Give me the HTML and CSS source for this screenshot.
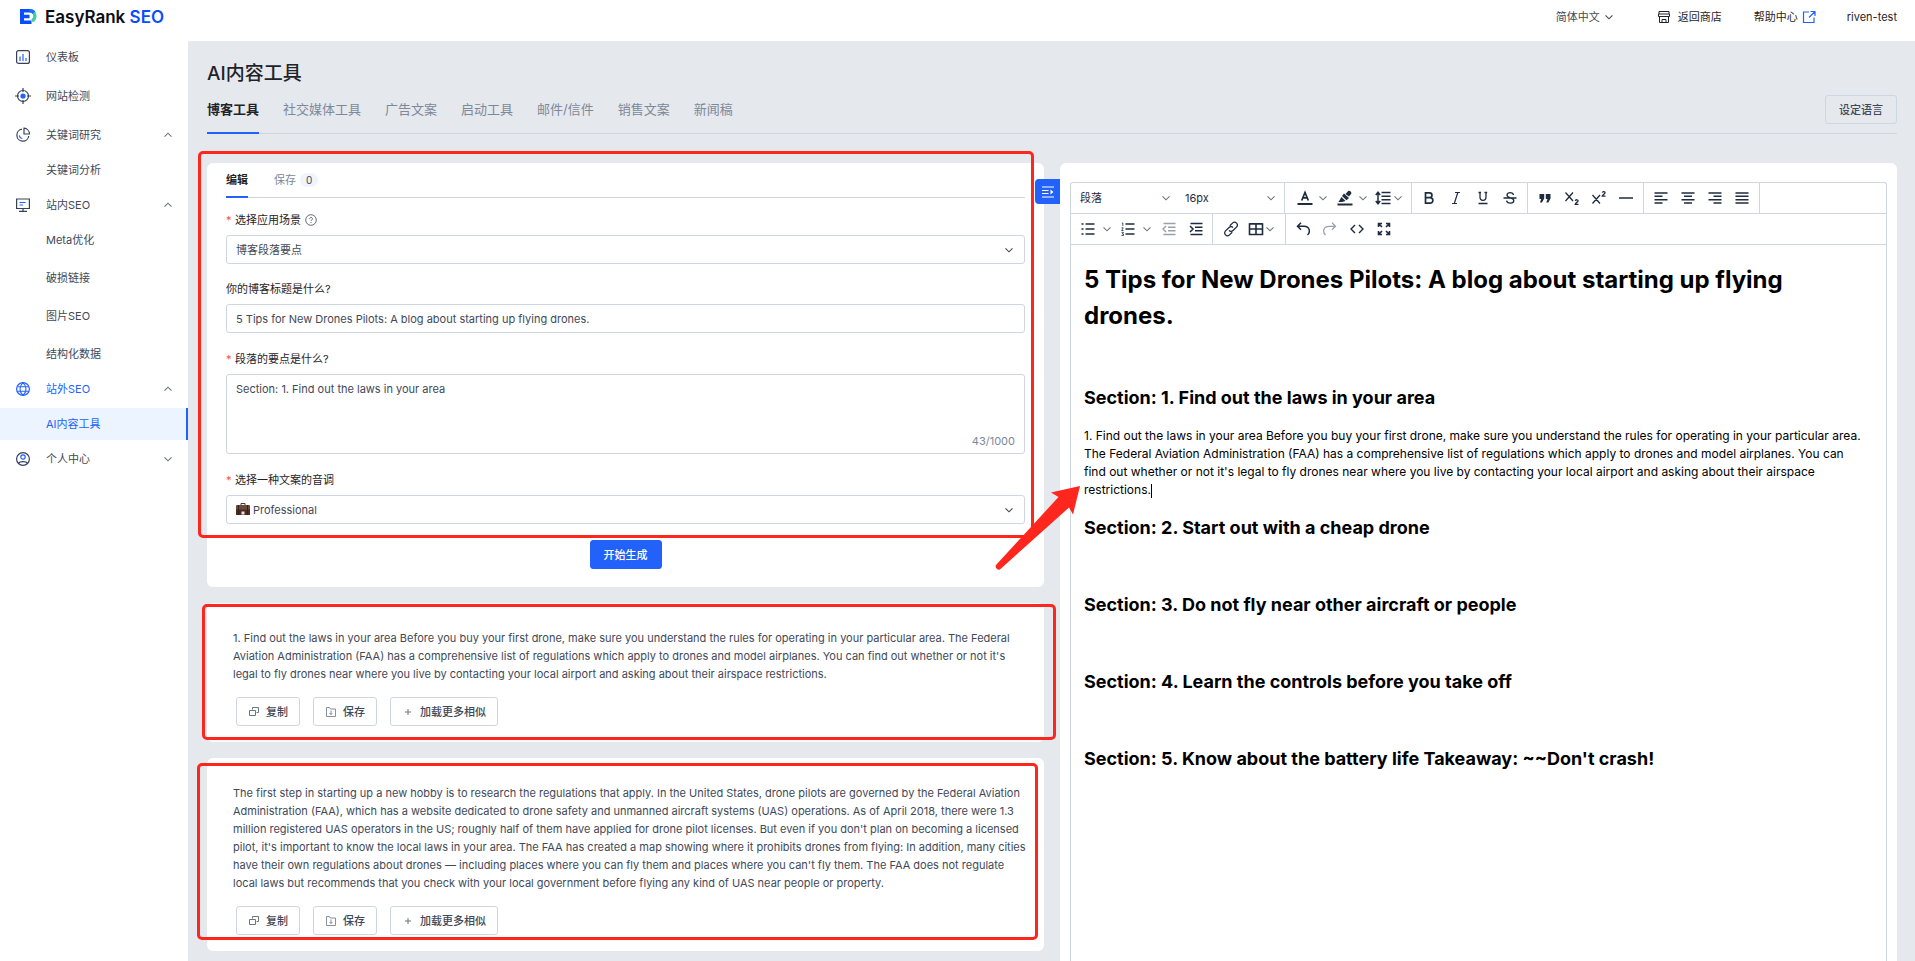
FILE: index.html
```html
<!DOCTYPE html>
<html lang="zh-CN">
<head>
<meta charset="utf-8">
<meta name="viewport" content="width=device-width, initial-scale=1">
<title>EasyRank SEO - AI内容工具</title>
<link rel="stylesheet" href="styles.css">
</head>
<body>
<svg class="sprite" aria-hidden="true">
  <symbol id="chev" viewBox="0 0 10 10"><path d="M1.5 3.3 5 6.8l3.5-3.5" fill="none" stroke="currentColor" stroke-width="1.100"/></symbol>
  <symbol id="copy" viewBox="0 0 12 12"><path d="M4.5 3.500V1.500h6v5h-2M1.500 4.500h6v5h-6z" fill="none" stroke="currentColor"/></symbol>
  <symbol id="save" viewBox="0 0 12 12"><path d="M1.500 1.500h3l1 1.500h5v7.500h-9zM6 4.500v4M4.500 7 6 8.500 7.500 7" fill="none" stroke="currentColor" stroke-width=".8"/></symbol>
  <symbol id="plus" viewBox="0 0 12 12"><path d="M6 3v6M3 6h6" fill="none" stroke="currentColor"/></symbol>
</svg>

<header class="topbar">
  <a class="brand" href="#">
    <svg class="brand-mark" viewBox="0 0 18 18" aria-hidden="true">
      <path d="M1 1h11.500v3.500H5v2.300h5.500v3.400H5v2.300h7.500V16H1z" fill="#0a4dff"/>
      <path d="M11 1c4 0 6.500 3.300 6.500 7 0 3-1.500 5.500-4 6.300l-1.200-3c1.200-.6 1.900-1.800 1.900-3.300 0-2-1.300-3.500-3.200-3.500z" fill="#3ecf9b"/>
      <path d="M10.500 1c3 0 4.700 1 5.700 2.500L13.500 6c-.6-1-1.500-1.500-3-1.500z" fill="#1a6fff"/>
    </svg>
    <span>EasyRank <b>SEO</b></span>
  </a>
  <nav class="top-links">
    <button type="button" class="lang">简体中文 <svg class="i10"><use href="#chev"/></svg></button>
    <a href="#" class="shop"><svg class="i14" viewBox="0 0 14 14"><path d="M2 1.500h10V4M1.500 4h11v2.500h-11zM2.500 6.500v6h9v-6M5 12V9.500h4V12M2 1.500V4" fill="none" stroke="currentColor"/></svg>返回商店</a>
    <a href="#" class="help">帮助中心<svg class="i14" viewBox="0 0 14 14"><path d="M7 2H1.500v10.500H12V7.500M8.500 1.500H13V6M13 1.500 7 7.500" fill="none" stroke="#2262fb" stroke-width="1.200"/></svg></a>
    <a href="#">riven-test</a>
  </nav>
</header>

<div class="shell">
  <aside class="sidebar">
    <ul class="menu">
      <li class="plain"><a class="row" href="#"><svg class="i16" viewBox="0 0 16 16"><rect x="1.600" y="1.600" width="12.800" height="12.800" rx="2" fill="none" stroke="currentColor" stroke-width="1.200"/><path d="M5 12V7.500M8 12V5M11 12V9" stroke="#2262fb" stroke-width="1.200"/></svg>仪表板</a></li>
      <li class="plain"><a class="row" href="#"><svg class="i16" viewBox="0 0 16 16"><circle cx="8" cy="8" r="5.500" fill="none" stroke="currentColor" stroke-width="1.200"/><path d="M8 0v4M8 12v4M0 8h4M12 8h4" stroke="currentColor" stroke-width="1.200"/><circle cx="8" cy="8" r="2.600" fill="#2262fb"/></svg>网站检测</a></li>
      <li>
        <button class="row" type="button"><svg class="i16" viewBox="0 0 16 16"><path d="M7 2.200A6 6 0 1 0 13.800 9M9 1.200V7h5.500A6 6 0 0 0 9 1.200z" fill="none" stroke="currentColor" stroke-width="1.200"/><path d="M4.300 8.500a3.600 3.600 0 0 0 3 3" fill="none" stroke="#2262fb" stroke-width="1.200"/></svg>关键词研究<svg class="i10 arrow up"><use href="#chev"/></svg></button>
        <ul class="sub"><li><a class="row" href="#">关键词分析</a></li></ul>
      </li>
      <li>
        <button class="row" type="button"><svg class="i16" viewBox="0 0 16 16"><path d="M1.600 2h12.800v9.500H1.600zM4 14.400h8M8 11.500v3" fill="none" stroke="currentColor" stroke-width="1.200"/><path d="M4.500 5.500h6M4.500 8h3.500" stroke="#2262fb" stroke-width="1.200"/></svg>站内SEO<svg class="i10 arrow up"><use href="#chev"/></svg></button>
        <ul class="sub">
          <li><a class="row" href="#">Meta优化</a></li>
          <li><a class="row" href="#">破损链接</a></li>
          <li><a class="row" href="#">图片SEO</a></li>
          <li><a class="row" href="#">结构化数据</a></li>
        </ul>
      </li>
      <li>
        <button class="row open" type="button"><svg class="i16" viewBox="0 0 16 16"><circle cx="8" cy="8" r="6.400" fill="none" stroke="currentColor" stroke-width="1.200"/><path d="M8 1.600c-4 3.800-4 9 0 12.800M8 1.600c4 3.800 4 9 0 12.800M2.300 5.700h11.400M2.300 10.300h11.400" fill="none" stroke="currentColor" stroke-width="1.100"/></svg>站外SEO<svg class="i10 arrow up"><use href="#chev"/></svg></button>
        <ul class="sub"><li><a class="row current" href="#" aria-current="page">AI内容工具</a></li></ul>
      </li>
      <li>
        <button class="row" type="button"><svg class="i16" viewBox="0 0 16 16"><circle cx="8" cy="8" r="6.400" fill="none" stroke="currentColor" stroke-width="1.200"/><path d="M3.500 12.500c1.200-2.400 7.800-2.400 9 0" fill="none" stroke="currentColor" stroke-width="1.200"/><circle cx="8" cy="6" r="2.200" fill="none" stroke="#2262fb" stroke-width="1.200"/></svg>个人中心<svg class="i10 arrow"><use href="#chev"/></svg></button>
      </li>
    </ul>
  </aside>

  <main class="main">
    <h1 class="page-title">AI内容工具</h1>
    <div class="tabs">
      <button type="button" class="tab active">博客工具</button>
      <button type="button" class="tab">社交媒体工具</button>
      <button type="button" class="tab">广告文案</button>
      <button type="button" class="tab">启动工具</button>
      <button type="button" class="tab">邮件/信件</button>
      <button type="button" class="tab">销售文案</button>
      <button type="button" class="tab">新闻稿</button>
      <button type="button" class="btn set-lang">设定语言</button>
    </div>

    <div class="workspace">
      <div class="column">
        <section class="card form-card">
          <div class="card-tabs">
            <button type="button" class="tab active">编辑</button>
            <button type="button" class="tab">保存<span class="count">0</span></button>
          </div>
          <form class="form">
            <div class="field">
              <label for="scene"><i>*</i>选择应用场景<svg class="i12" viewBox="0 0 12 12"><circle cx="6" cy="6" r="5.300" fill="none" stroke="currentColor" stroke-width=".8"/><path d="M4.600 4.900c0-1.900 2.900-1.900 2.900-.1 0 1.100-1.500 1.100-1.500 2.200M6 8v1" fill="none" stroke="currentColor" stroke-width=".8"/></svg></label>
              <div class="picker"><select id="scene"><option>博客段落要点</option></select><svg class="i10"><use href="#chev"/></svg></div>
            </div>
            <div class="field">
              <label for="blog-title">你的博客标题是什么?</label>
              <input id="blog-title" type="text" value="5 Tips for New Drones Pilots: A blog about starting up flying drones.">
            </div>
            <div class="field">
              <label for="points"><i>*</i>段落的要点是什么?</label>
              <div class="area"><textarea id="points">Section: 1. Find out the laws in your area</textarea><span class="counter">43/1000</span></div>
            </div>
            <div class="field">
              <label for="tone"><i>*</i>选择一种文案的音调</label>
              <div class="picker with-icon">
                <svg class="case" viewBox="0 0 14 14" aria-hidden="true"><path d="M5 3.500V1.500h4v2" fill="none" stroke="#4a3a33"/><rect y="3" width="14" height="10" rx="1" fill="#6b4a3a"/><path d="M0 7.500h14V12a1 1 0 0 1-1 1H1a1 1 0 0 1-1-1z" fill="#4a2c22"/><path d="M2.500 3v10M11.500 3v10" stroke="#35201a"/><rect x="5.500" y="9.500" width="3" height="3" fill="#e9e4e0"/></svg>
                <select id="tone"><option>Professional</option></select><svg class="i10"><use href="#chev"/></svg>
              </div>
            </div>
            <button type="button" class="btn primary">开始生成</button>
          </form>
          <span class="mark mark-form"></span>
          <svg class="pointer" viewBox="0 0 88 88" aria-hidden="true"><path d="M86 2 57 8.500l7.500 4.500L2.500 80.500a2.800 2.800 0 0 0 4.500 4L75 23.500l4 7z" fill="#ff261e"/></svg>
        </section>

        <section class="card result">
          <p>1. Find out the laws in your area Before you buy your first drone, make sure you understand the rules for operating in your particular area. The Federal Aviation Administration (FAA) has a comprehensive list of regulations which apply to drones and model airplanes. You can find out whether or not it's legal to fly drones near where you live by contacting your local airport and asking about their airspace restrictions.</p>
          <div class="actions">
            <button type="button" class="btn"><svg class="i12"><use href="#copy"/></svg>复制</button>
            <button type="button" class="btn"><svg class="i12"><use href="#save"/></svg>保存</button>
            <button type="button" class="btn"><svg class="i12"><use href="#plus"/></svg>加载更多相似</button>
          </div>
          <span class="mark mark-first"></span>
        </section>

        <section class="card result">
          <p>The first step in starting up a new hobby is to research the regulations that apply. In the United States, drone pilots are governed by the Federal Aviation Administration (FAA), which has a website dedicated to drone safety and unmanned aircraft systems (UAS) operations. As of April 2018, there were 1.3 million registered UAS operators in the US; roughly half of them have applied for drone pilot licenses. But even if you don't plan on becoming a licensed pilot, it's important to know the local laws in your area. The FAA has created a map showing where it prohibits drones from flying: In addition, many cities have their own regulations about drones — including places where you can fly them and places where you can't fly them. The FAA does not regulate local laws but recommends that you check with your local government before flying any kind of UAS near people or property.</p>
          <div class="actions">
            <button type="button" class="btn"><svg class="i12"><use href="#copy"/></svg>复制</button>
            <button type="button" class="btn"><svg class="i12"><use href="#save"/></svg>保存</button>
            <button type="button" class="btn"><svg class="i12"><use href="#plus"/></svg>加载更多相似</button>
          </div>
          <span class="mark mark-second"></span>
        </section>
      </div>

      <section class="card editor-card">
        <button type="button" class="collapse" aria-label="收起"><svg class="i12" viewBox="0 0 12 12"><path d="M0 1h12M0 4.500h6.500M0 7.500h6.500M0 11h12" stroke="#fff" stroke-width="1.100"/><path d="M8.500 3.500 11.500 6l-3 2.500z" fill="#fff"/></svg></button>
        <div class="editor">
          <div class="bar">
            <div class="group">
              <div class="mini wide"><select aria-label="段落样式"><option>段落</option></select><svg class="i10"><use href="#chev"/></svg></div>
              <div class="mini"><select aria-label="字号"><option>16px</option></select><svg class="i10"><use href="#chev"/></svg></div>
            </div>
            <div class="group split">
              <button type="button" aria-label="文字颜色"><svg class="i16" viewBox="0 0 16 16"><path d="M.5 14h15" stroke="currentColor" stroke-width="2"/><path d="M4.700 10.500 8 2.500l3.300 8M6 7.800h4" fill="none" stroke="currentColor" stroke-width="1.700"/></svg><svg class="i10"><use href="#chev"/></svg></button>
              <button type="button" aria-label="背景颜色"><svg class="i16" viewBox="0 0 16 16"><path d="M.5 14.500h15" stroke="currentColor" stroke-width="2"/><path d="M1.500 12 4.500 7l4 4L5 12zM5 6l2-2.500 5 4.500-2.500 2.300zM8.500 4 11 1.200c1.500-1.500 4.500 1.200 3 2.900l-2 2.500z" fill="currentColor"/></svg><svg class="i10"><use href="#chev"/></svg></button>
              <button type="button" class="tight" aria-label="行高"><svg class="i16" viewBox="0 0 16 16"><path d="M6.500 2.500h9M6.500 6.200h9M6.500 9.800h9M6.500 13.500h9M3 3v10M.8 5 3 2.200 5.200 5M.8 11 3 13.800 5.200 11" fill="none" stroke="currentColor" stroke-width="1.500"/></svg><svg class="i10"><use href="#chev"/></svg></button>
            </div>
            <div class="group four">
              <button type="button" aria-label="粗体"><svg class="i14" viewBox="0 0 14 14"><path d="M3.500 1.800h4a2.400 2.400 0 0 1 0 4.900h-4zM3.500 6.700h4.600a2.700 2.700 0 0 1 0 5.500H3.500z" fill="none" stroke="currentColor" stroke-width="1.700"/></svg></button>
              <button type="button" aria-label="斜体"><svg class="i14" viewBox="0 0 14 14"><path d="M6 1.500h5M3 12.500h5M8.800 1.500l-3.500 11" fill="none" stroke="currentColor" stroke-width="1.200"/></svg></button>
              <button type="button" aria-label="下划线"><svg class="i14" viewBox="0 0 14 14"><path d="M4 1.500V6c0 4.500 6 4.500 6 0V1.500M2.500 1.500H5M8.500 1.500h2.700M2.500 12.500h9" fill="none" stroke="currentColor" stroke-width="1.300"/></svg></button>
              <button type="button" aria-label="删除线"><svg class="i14" viewBox="0 0 14 14"><path d="M10.500 4C10 .8 4 .8 4 4c0 3.500 6.800 2.200 6.800 5.500 0 3.400-6.500 3.400-7.300.2M.5 7h13" fill="none" stroke="currentColor" stroke-width="1.300"/></svg></button>
            </div>
            <div class="group four">
              <button type="button" aria-label="引用"><svg class="i14" viewBox="0 0 14 14"><path d="M1.500 3h4.700v4.500L4 11.500H2L3.200 8H1.500zM7.800 3h4.700v4.500l-2.200 4h-2L9.500 8H7.800z" fill="currentColor"/></svg></button>
              <button type="button" aria-label="下标"><svg class="i16" viewBox="0 0 16 16"><path d="M1.500 2.500 9 11M9 2.500 1.500 11M11.300 10.800c.3-1.500 3-1.300 2.700.3-.2 1-2.500 1.700-2.800 3.200H14.500" fill="none" stroke="currentColor" stroke-width="1.300"/></svg></button>
              <button type="button" aria-label="上标"><svg class="i16" viewBox="0 0 16 16"><path d="M1.500 5 9 13.500M9 5 1.500 13.500M11.300 2.600c.3-1.500 3-1.300 2.700.3-.2 1-2.500 1.700-2.800 3.200H14.500" fill="none" stroke="currentColor" stroke-width="1.300"/></svg></button>
              <button type="button" aria-label="分隔线"><svg class="i14" viewBox="0 0 14 14"><path d="M0 7h14" stroke="currentColor" stroke-width="1.500"/></svg></button>
            </div>
            <div class="group four">
              <button type="button" aria-label="左对齐"><svg class="i14" viewBox="0 0 14 14"><path d="M.5 2h13M.5 5.300h8M.5 8.700h13M.5 12h8" stroke="currentColor" stroke-width="1.500"/></svg></button>
              <button type="button" aria-label="居中"><svg class="i14" viewBox="0 0 14 14"><path d="M.5 2h13M3 5.300h8M.5 8.700h13M3 12h8" stroke="currentColor" stroke-width="1.500"/></svg></button>
              <button type="button" aria-label="右对齐"><svg class="i14" viewBox="0 0 14 14"><path d="M.5 2h13M5.500 5.300h8M.5 8.700h13M5.500 12h8" stroke="currentColor" stroke-width="1.500"/></svg></button>
              <button type="button" aria-label="两端对齐"><svg class="i14" viewBox="0 0 14 14"><path d="M.5 2h13M.5 5.300h13M.5 8.700h13M.5 12h13" stroke="currentColor" stroke-width="1.500"/></svg></button>
            </div>
          </div>
          <div class="bar">
            <div class="group lists">
              <button type="button" class="list-type" aria-label="项目符号"><svg class="i14" viewBox="0 0 14 14"><path d="M4.500 2h9M4.500 7h9M4.500 12h9M.5 2h2M.5 7h2M.5 12h2" stroke="currentColor" stroke-width="1.600"/></svg><svg class="i10"><use href="#chev"/></svg></button>
              <button type="button" class="list-type" aria-label="编号"><svg class="i14" viewBox="0 0 14 14"><path d="M4.500 2h9M4.500 7h9M4.500 12h9" stroke="currentColor" stroke-width="1.600"/><path d="M.8 1h1v3M.5 5.800h1.700L.7 8.500h1.800M.5 10.300h2L1.300 12h1.200v1.500h-2" fill="none" stroke="currentColor" stroke-width=".8"/></svg><svg class="i10"><use href="#chev"/></svg></button>
              <button type="button" class="faded" aria-label="减少缩进"><svg class="i14" viewBox="0 0 14 14"><path d="M1.500 1.500h12M6 5.200h7.500M6 8.800h7.500M1.500 12.500h12M4 4 1 7l3 3" fill="none" stroke="currentColor" stroke-width="1.500"/></svg></button>
              <button type="button" aria-label="增加缩进"><svg class="i14" viewBox="0 0 14 14"><path d="M1.500 1.500h12M6 5.200h7.500M6 8.800h7.500M1.500 12.500h12M1 4l3 3-3 3" fill="none" stroke="currentColor" stroke-width="1.500"/></svg></button>
            </div>
            <div class="group insert">
              <button type="button" aria-label="链接"><svg class="i16" viewBox="0 0 16 16"><path d="M6.800 4.800 9.500 2.100a2.700 2.700 0 0 1 4 4L10 9.500a2.700 2.700 0 0 1-4-.2M9.200 11.200l-2.700 2.700a2.700 2.700 0 0 1-4-4L6 6.500a2.700 2.700 0 0 1 4 .2" fill="none" stroke="currentColor" stroke-width="1.300"/></svg></button>
              <button type="button" class="tight" aria-label="表格"><svg class="i16" viewBox="0 0 16 16"><path d="M1.500 3h13v10.500h-13zM1.500 8h13M8 3v10.500M1.500 2.800h13" fill="none" stroke="currentColor" stroke-width="1.600"/></svg><svg class="i10"><use href="#chev"/></svg></button>
            </div>
            <div class="group history">
              <button type="button" aria-label="撤销"><svg class="i14" viewBox="0 0 14 14"><path d="M5 .8 1.500 4.300 5 7.800M1.500 4.300H8c6 0 6.500 6 3.500 8.700" fill="none" stroke="currentColor" stroke-width="1.500"/></svg></button>
              <button type="button" class="faded" aria-label="重做"><svg class="i14" viewBox="0 0 14 14"><path d="m9 .8 3.500 3.500L9 7.800M12.500 4.300H6c-6 0-6.500 6-3.500 8.700" fill="none" stroke="currentColor" stroke-width="1.300"/></svg></button>
              <button type="button" aria-label="源代码"><svg class="i14" viewBox="0 0 14 14"><path d="M5 3 1 7l4 4M9 3l4 4-4 4" fill="none" stroke="currentColor" stroke-width="1.400"/></svg></button>
              <button type="button" aria-label="全屏"><svg class="i14" viewBox="0 0 14 14"><path d="M1.500 5V1.500H5M1.500 1.500 5 5M9 1.500h3.500V5M12.500 1.500 9 5M1.500 9v3.500H5M1.500 12.500 5 9M12.500 9v3.500H9M12.500 12.500 9 9" fill="none" stroke="currentColor" stroke-width="1.600"/></svg></button>
            </div>
          </div>
          <article class="doc" contenteditable="true">
            <h1>5 Tips for New Drones Pilots: A blog about starting up flying drones.</h1>
            <h2 class="first">Section: 1. Find out the laws in your area</h2>
            <p>1. Find out the laws in your area Before you buy your first drone, make sure you understand the rules for operating in your particular area. The Federal Aviation Administration (FAA) has a comprehensive list of regulations which apply to drones and model airplanes. You can find out whether or not it's legal to fly drones near where you live by contacting your local airport and asking about their airspace restrictions.<span class="caret"></span></p>
            <h2>Section: 2. Start out with a cheap drone</h2>
            <h2>Section: 3. Do not fly near other aircraft or people</h2>
            <h2>Section: 4. Learn the controls before you take off</h2>
            <h2>Section: 5. Know about the battery life Takeaway: ~~Don't crash!</h2>
          </article>
        </div>
      </section>
    </div>
  </main>
</div>
</body>
</html>
```

FILE: styles.css
```css
:root {
  --blue: #2262fb;
  --line: #ced5e3;
  --text: #414958;
  --dark: #1f2329;
  --muted: #7d889b;
  --red: #ff261e;
}

* { box-sizing: border-box; }

body {
  margin: 0;
  height: 100vh;
  overflow: hidden;
  display: flex;
  flex-direction: column;
  font: 11px/18px Inter, "Noto Sans CJK SC", sans-serif;
  color: var(--text);
  background: #fff;
}

a { color: inherit; text-decoration: none; }
ul { list-style: none; margin: 0; padding: 0; }
button, input, select, textarea { font: inherit; color: inherit; }
button { border: 0; padding: 0; background: none; cursor: pointer; }

.sprite { position: absolute; width: 0; height: 0; }
.i10 { width: 10px; height: 10px; flex: none; }
.i12 { width: 12px; height: 12px; flex: none; }
.i14 { width: 14px; height: 14px; flex: none; }
.i16 { width: 16px; height: 16px; flex: none; }

/* Top bar */
.topbar {
  flex: none;
  height: 41px;
  padding: 0 18px 7px 19px;
  display: flex;
  align-items: center;
  justify-content: space-between;
}
.brand { display: flex; align-items: center; gap: 8px; font-size: 17px; font-weight: 600; color: #0b0d12; }
.brand b { font-weight: 600; color: #0a4dff; }
.brand-mark { width: 18px; height: 18px; }
.top-links { display: flex; align-items: center; color: var(--dark); }
.top-links a, .lang { display: flex; align-items: center; }
.lang { gap: 4px; margin-right: 43px; color: var(--text); }
.shop { gap: 7px; margin-right: 32px; }
.help { gap: 4px; margin-right: 31px; }

.shell { flex: 1; display: flex; min-height: 0; }

/* Sidebar */
.sidebar { flex: none; width: 188px; }
.plain { margin-bottom: 7px; }
.row {
  width: 100%;
  height: 32px;
  padding: 0 15px;
  display: flex;
  align-items: center;
  gap: 15px;
  text-align: left;
}
.row svg { color: #36425a; }
.row .arrow { margin-left: auto; color: #6b7483; }
.up { transform: rotate(180deg); }
.row.open, .row.open svg:first-child { color: var(--blue); }
.sub { padding: 3px 0; display: grid; gap: 6px; }
.sub .row { padding-left: 46px; }
.row.current { color: var(--blue); background: #ebf4ff; border-right: 2px solid var(--blue); }

/* Page head */
.main { flex: 1; min-width: 0; display: flex; flex-direction: column; padding: 21px 18px 0 19px; background: #e5e8ed; }
.page-title { margin: 0; font-size: 19px; line-height: 24px; font-weight: 500; color: var(--dark); }
.tabs { height: 48px; display: flex; align-items: center; gap: 24px; border-bottom: 1px solid var(--line); font-size: 13px; }
.tab { color: var(--muted); }
.tabs .tab, .card-tabs .tab { align-self: stretch; margin-bottom: -1px; border-bottom: 2px solid transparent; }
.tabs .tab.active, .card-tabs .tab.active { color: var(--dark); font-weight: 600; border-color: var(--blue); }
.btn {
  height: 29px;
  padding: 0 13px;
  display: inline-flex;
  align-items: center;
  justify-content: center;
  gap: 6px;
  border: 1px solid var(--line);
  border-radius: 3px;
  font-size: 11px;
  font-weight: 500;
}
.btn svg { color: #6b7483; }
.set-lang { margin-left: auto; }
.primary { background: var(--blue); border-color: var(--blue); color: #fff; }

/* Columns */
.workspace { flex: 1; min-height: 0; margin-top: 29px; display: grid; grid-template-columns: minmax(0, 1fr) minmax(0, 1fr); gap: 16px; }
.column { display: flex; flex-direction: column; gap: 16px; }
.card { position: relative; background: #fff; border-radius: 6px; }

/* Form */
.form-card { padding: 0 19px 18px; }
.card-tabs { height: 35px; display: flex; gap: 26px; border-bottom: 1px solid var(--line); }
.count { display: inline-block; margin-left: 4px; padding: 0 6px; border-radius: 7px; line-height: 14px; font-size: 10px; background: #f0f4fb; color: var(--text); }
.form { padding-top: 13px; display: flex; flex-direction: column; }
.field { margin-bottom: 17px; }
.field:first-child, .field:nth-child(4) { margin-bottom: 16px; }
.field label { display: flex; align-items: center; height: 18px; margin-bottom: 6px; color: var(--dark); }
.field label i { width: 9px; font-style: normal; color: #ff4d4f; }
.field label svg { margin-left: 4px; color: var(--text); }
.field input, .field select, .field textarea {
  display: block;
  width: 100%;
  height: 29px;
  padding: 0 9px;
  border: 1px solid var(--line);
  border-radius: 3px;
  background: #fff;
  appearance: none;
  outline: 0;
}
.field textarea { height: 80px; padding: 5px 9px; resize: none; }
.picker, .area, .mini { position: relative; }
.picker .i10 { position: absolute; right: 11px; top: 10px; pointer-events: none; }
.with-icon .case + select { padding-left: 26px; }
.case { position: absolute; left: 10px; top: 7px; width: 14px; height: 14px; }
.counter { position: absolute; right: 10px; bottom: 4px; color: var(--muted); }
.form .primary { align-self: center; }

/* Results */
.result { padding: 26px 15px 16px 26px; }
.result p { margin: 0; }
.actions { display: flex; gap: 13px; margin: 14px 0 0 3px; }
.actions .btn { padding: 0 11px; }

/* Highlight frames */
.mark { position: absolute; z-index: 2; border: 3px solid var(--red); border-radius: 5px; pointer-events: none; }
.mark-form { inset: -12px 10px 49px -9px; }
.mark-first { inset: 1px -12px 2px -5px; }
.mark-second { inset: 5px 6px 11px -10px; }
.pointer { position: absolute; z-index: 3; right: -38px; bottom: 15px; width: 88px; height: 88px; pointer-events: none; }

/* Editor */
.editor-card { padding: 19px 10px 0; border-radius: 6px 6px 0 0; }
.collapse { position: absolute; z-index: 1; left: -25px; top: 16px; width: 25px; height: 25px; display: grid; place-items: center; background: var(--blue); border-radius: 4px 0 0 4px; }
.editor { height: 100%; border: 1px solid var(--line); border-bottom: 0; border-radius: 3px 3px 0 0; color: #1f2b3e; }
.bar { height: 31px; display: flex; border-bottom: 1px solid var(--line); }
.group { display: flex; align-items: center; border-right: 1px solid var(--line); }
.group.history { border-right: 0; }
.group button { display: flex; align-items: center; justify-content: center; width: 27px; height: 100%; }
.group .i10 { color: #6b7483; }
.mini { width: 105px; }
.mini.wide { width: 108px; }
.mini select { width: 100%; height: 30px; padding: 0 0 0 6px; border: 0; background: none; appearance: none; }
.mini.wide select { padding-left: 9px; }
.mini .i10 { position: absolute; right: 8px; top: 10px; pointer-events: none; }
.split { padding: 0 7px 0 9px; gap: 4px; }
.split button { width: 36px; gap: 5px; }
.split button.tight { width: 30px; gap: 2px; }
.four { padding: 0 4px 0 3px; }
.lists { padding: 0 3px 0 10px; }
.lists .list-type { width: 31px; gap: 7px; margin-right: 9px; }
.lists .list-type + .list-type { margin-right: 3px; }
.insert { padding: 0 6px 0 4px; }
.insert .tight { width: 35px; gap: 1px; }
.history { padding-left: 3px; }
.faded { color: #9aa1ac; }

.doc { padding: 17px 13px 0; color: #000; font-size: 12px; outline: 0; }
.doc h1 { margin: 0 0 50px; font-size: 24px; line-height: 36px; font-weight: 700; }
.doc h2 { margin: 0 0 50px; font-size: 18px; line-height: 27px; font-weight: 700; }
.doc h2.first { margin-bottom: 16px; }
.doc p { margin: 0 0 15px; padding-right: 9px; }
.caret { display: inline-block; width: 1px; height: 14px; background: #000; vertical-align: middle; }
```
